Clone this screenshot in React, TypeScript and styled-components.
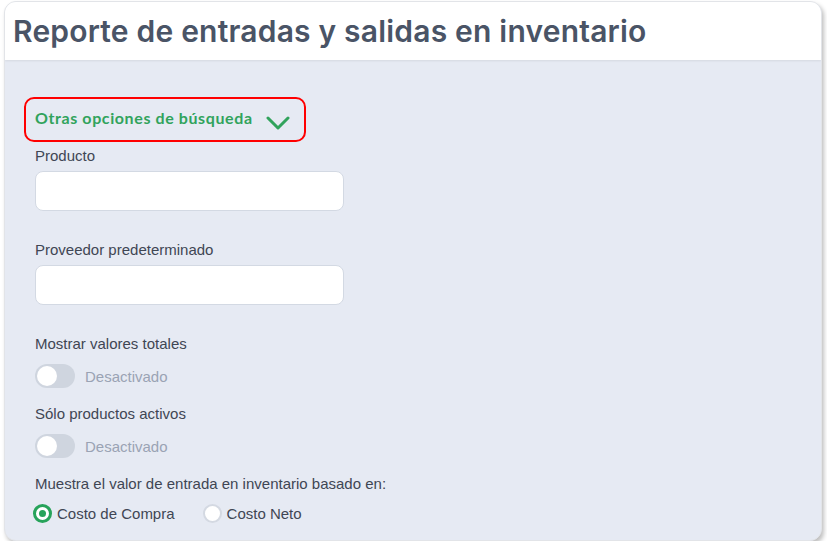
import styled, { createGlobalStyle } from "styled-components";

const GlobalStyle = createGlobalStyle`
  body {
    margin: 0;
    background: #ffffff;
    font-family: "Liberation Sans", Arial, sans-serif;
  }
`;

const Page = styled.div`
  padding: 1px 5px 0 4px;
`;

const Card = styled.div`
  display: flex;
  flex-direction: column;
  border-radius: 12px;
  background: #e6eaf3;
  border: 1px solid #e2e4e8;
  box-shadow: 2px 3px 4px rgba(0, 0, 0, 0.25);
  overflow: hidden;
`;

const Header = styled.div`
  height: 58px;
  background: #ffffff;
  display: flex;
  align-items: center;
  padding-left: 8px;
  box-shadow: 0 1px 2px rgba(0, 0, 0, 0.08);
  position: relative;
  z-index: 1;
`;

const Title = styled.h1`
  margin: 0;
  font-family: Inter, "Noto Sans", sans-serif;
  font-weight: 600;
  font-size: 30px;
  letter-spacing: 0.2px;
  color: #4a5466;
`;

const Body = styled.div`
  display: flex;
  flex-direction: column;
  padding: 37px 20px 17px 19px;
`;

const Toggler = styled.div`
  width: 282px;
  height: 45px;
  box-sizing: border-box;
  border: 2px solid #ff0000;
  border-radius: 10px;
  display: flex;
  align-items: center;
  padding: 0 14px 0 9px;
  margin-bottom: 6px;
`;

const TogglerText = styled.span`
  font-family: Lato, "Noto Sans", sans-serif;
  font-weight: 700;
  font-size: 16px;
  letter-spacing: 0.6px;
  color: #31a35c;
  flex: 1;
  margin-top: -4px;
`;

const Fields = styled.div`
  display: flex;
  flex-direction: column;
  padding-left: 11px;
`;

const Label = styled.div<{ $gap?: number }>`
  font-size: 15px;
  line-height: 16px;
  color: #3f4654;
  margin-top: ${(p) => p.$gap ?? 0}px;
`;

const Input = styled.input`
  margin-top: 7px;
  width: 309px;
  height: 40px;
  box-sizing: border-box;
  border: 1px solid #d3d9e3;
  border-radius: 8px;
  background: #ffffff;
  outline: none;
`;

const SwitchRow = styled.div`
  display: flex;
  align-items: center;
  gap: 10px;
  margin-top: 12px;
`;

const Track = styled.div`
  width: 40px;
  height: 24px;
  border-radius: 12px;
  background: #cfd5df;
  display: flex;
  align-items: center;
  padding-left: 2px;
  box-sizing: border-box;
`;

const Knob = styled.div`
  width: 20px;
  height: 20px;
  border-radius: 50%;
  background: #ffffff;
`;

const SwitchText = styled.span`
  font-size: 15px;
  color: #9aa3b4;
`;

const RadioRow = styled.div`
  display: flex;
  align-items: center;
  gap: 28px;
  margin-top: 12px;
  margin-left: -2px;
`;

const RadioOption = styled.label`
  display: flex;
  align-items: center;
  gap: 5px;
  font-size: 15px;
  color: #3f4654;
`;

const RadioDot = styled.span<{ $checked?: boolean }>`
  width: 19px;
  height: 19px;
  box-sizing: border-box;
  border-radius: 50%;
  background: #ffffff;
  border: ${(p) => (p.$checked ? "3px solid #27a35a" : "2px solid #d4d9e2")};
  display: flex;
  align-items: center;
  justify-content: center;
  &::after {
    content: "";
    display: ${(p) => (p.$checked ? "block" : "none")};
    width: 7px;
    height: 7px;
    border-radius: 50%;
    background: #27a35a;
  }
`;

const Chevron = () => (
  <svg width="24" height="14" viewBox="0 0 24 14" style={{ marginTop: 6 }}>
    <path
      d="M2 2 L12 12 L22 2"
      fill="none"
      stroke="#31a35c"
      strokeWidth="3"
      strokeLinecap="round"
      strokeLinejoin="round"
    />
  </svg>
);

const Switch = () => (
  <SwitchRow>
    <Track>
      <Knob />
    </Track>
    <SwitchText>Desactivado</SwitchText>
  </SwitchRow>
);

export default function App() {
  return (
    <Page>
      <GlobalStyle />
      <Card>
        <Header>
          <Title>Reporte de entradas y salidas en inventario</Title>
        </Header>
        <Body>
          <Toggler>
            <TogglerText>Otras opciones de búsqueda</TogglerText>
            <Chevron />
          </Toggler>
          <Fields>
            <Label>Producto</Label>
            <Input />
            <Label $gap={31}>Proveedor predeterminado</Label>
            <Input />
            <Label $gap={31}>Mostrar valores totales</Label>
            <Switch />
            <Label $gap={18}>Sólo productos activos</Label>
            <Switch />
            <Label $gap={18}>Muestra el valor de entrada en inventario basado en:</Label>
            <RadioRow>
              <RadioOption>
                <RadioDot $checked />
                Costo de Compra
              </RadioOption>
              <RadioOption>
                <RadioDot />
                Costo Neto
              </RadioOption>
            </RadioRow>
          </Fields>
        </Body>
      </Card>
    </Page>
  );
}
